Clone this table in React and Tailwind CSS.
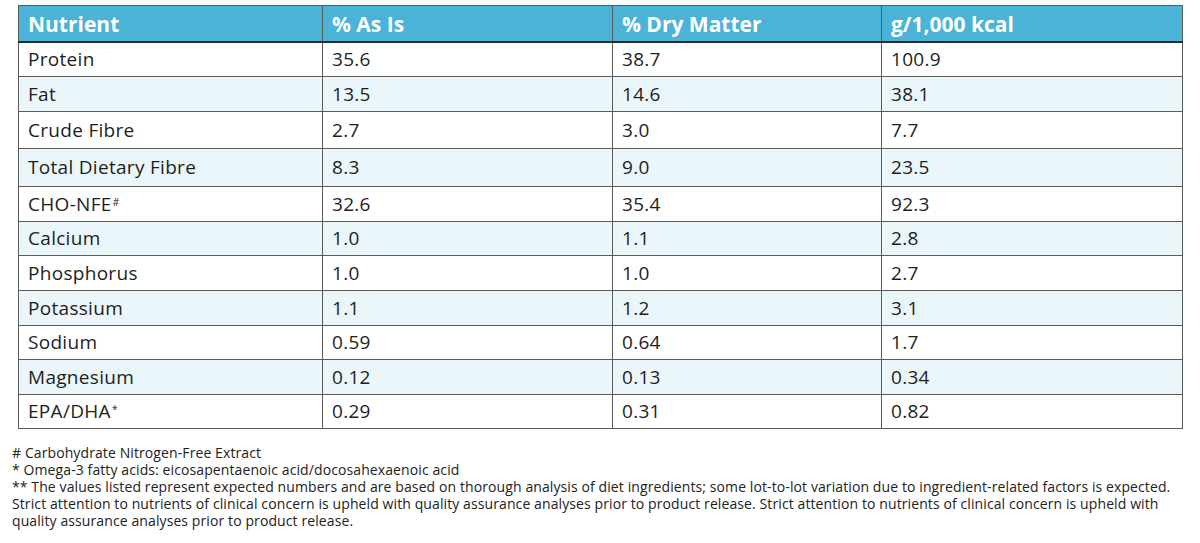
const rows = [
  ['Protein', '35.6', '38.7', '100.9', 'h-[35px]'],
  ['Fat', '13.5', '14.6', '38.1', 'h-[35px]'],
  ['Crude Fibre', '2.7', '3.0', '7.7', 'h-[37px]'],
  ['Total Dietary Fibre', '8.3', '9.0', '23.5', 'h-[38px]'],
  ['CHO-NFE', '32.6', '35.4', '92.3', 'h-[35px]', '#'],
  ['Calcium', '1.0', '1.1', '2.8', 'h-[34px]'],
  ['Phosphorus', '1.0', '1.0', '2.7', 'h-[35px]'],
  ['Potassium', '1.1', '1.2', '3.1', 'h-[35px]'],
  ['Sodium', '0.59', '0.64', '1.7', 'h-[34px]'],
  ['Magnesium', '0.12', '0.13', '0.34', 'h-[35px]'],
  ['EPA/DHA', '0.29', '0.31', '0.82', 'h-[34px]', '*'],
]

const cell = 'border-[1.5px] border-[#5a5a5a] px-[9px] text-left align-middle'

export default function App() {
  return (
    <div className="w-[1200px] h-[543px] bg-white pt-[5px] font-['Open_Sans','Lato',sans-serif] text-[#1e1e1e]">
      <table className="ml-[18px] w-[1164px] table-fixed border-collapse">
        <colgroup>
          <col className="w-[304px]" />
          <col className="w-[290px]" />
          <col className="w-[269px]" />
          <col className="w-[301px]" />
        </colgroup>
        <thead>
          <tr className="h-[36px] bg-[#4bb3d7] text-white text-[21px] font-bold">
            <th className={cell + ' pt-[2px] border-b-2 border-b-[#2a2a2a]'}>Nutrient</th>
            <th className={cell + ' pt-[2px] border-b-2 border-b-[#2a2a2a]'}>% As Is</th>
            <th className={cell + ' pt-[2px] border-b-2 border-b-[#2a2a2a]'}>% Dry Matter</th>
            <th className={cell + ' pt-[2px] border-b-2 border-b-[#2a2a2a]'}>g/1,000 kcal</th>
          </tr>
        </thead>
        <tbody className="text-[19px] tracking-[0.3px]">
          {rows.map((r, i) => (
            <tr key={r[0]} className={`${r[4]} ${i % 2 ? 'bg-[#eaf6f9]' : 'bg-white'}`}>
              <td className={cell}>
                {r[0]}
                {r[5] && <sup className="text-[10px] relative -top-[5px] ml-[1px]">{r[5]}</sup>}
              </td>
              <td className={cell}>{r[1]}</td>
              <td className={cell}>{r[2]}</td>
              <td className={cell}>{r[3]}</td>
            </tr>
          ))}
        </tbody>
      </table>
      <div className="mt-[15px] pl-[12px] text-[14px] leading-[17px] text-[#222] whitespace-nowrap tracking-[0.1px]">
        <p># Carbohydrate Nitrogen-Free Extract</p>
        <p>* Omega-3 fatty acids: eicosapentaenoic acid/docosahexaenoic acid</p>
        <p>** The values listed represent expected numbers and are based on thorough analysis of diet ingredients; some lot-to-lot variation due to ingredient-related factors is expected.</p>
        <p>Strict attention to nutrients of clinical concern is upheld with quality assurance analyses prior to product release. Strict attention to nutrients of clinical concern is upheld with</p>
        <p>quality assurance analyses prior to product release.</p>
      </div>
    </div>
  )
}
